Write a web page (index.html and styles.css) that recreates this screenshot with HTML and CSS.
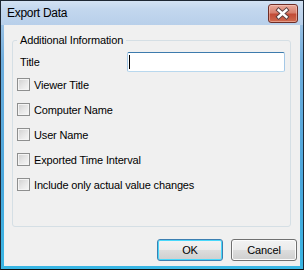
FILE: index.html
```html
<!DOCTYPE html>
<html lang="en">

<head>
    <meta charset="UTF-8">
    <title>Export Data</title>
    <link rel="stylesheet" href="styles.css">
</head>

<body>
    <div class="window">
        <div class="titlebar">
            <span class="title">Export Data</span>
            <span class="close">
                <svg width="30" height="19" viewBox="0 0 30 19">
                    <path d="M11 6 L19 13 M19 6 L11 13" stroke="#5b4040" stroke-width="4.6" stroke-linecap="square" fill="none"/>
                    <path d="M11 6 L19 13 M19 6 L11 13" stroke="#ffffff" stroke-width="2.6" stroke-linecap="square" fill="none"/>
                </svg>
            </span>
        </div>

        <div class="client">
            <fieldset class="group">
                <legend>Additional Information</legend>

                <div class="title-row">
                    <span class="label">Title</span>
                    <span class="textbox"><span class="caret"></span></span>
                </div>

                <div class="check"><span class="box"></span>Viewer Title</div>
                <div class="check"><span class="box"></span>Computer Name</div>
                <div class="check"><span class="box"></span>User Name</div>
                <div class="check"><span class="box"></span>Exported Time Interval</div>
                <div class="check"><span class="box"></span>Include only actual value changes</div>
            </fieldset>

            <div class="buttons">
                <span class="btn default">OK</span>
                <span class="btn">Cancel</span>
            </div>
        </div>
    </div>
</body>

</html>
```

FILE: styles.css
```css
html,
body {
    margin: 0;
    padding: 0;
}

body {
    font-family: "Liberation Sans", Arial, sans-serif;
    font-size: 11px;
    letter-spacing: -0.15px;
    color: #000;
}

.window {
    box-sizing: border-box;
    width: 304px;
    height: 270px;
    border: 1px solid #1d2733;
    border-bottom-color: #0c0c0c;
    background: linear-gradient(to bottom, #b6cde8 0, #6eaddd 60px, #4aa7dc 180px, #38b6e4 100%);
    display: flex;
    flex-direction: column;
}

.titlebar {
    height: 24px;
    display: flex;
    align-items: flex-start;
    background: linear-gradient(to bottom, #d3e2f3 0, #c3d7ee 8px, #b8cfea 24px);
}

.title {
    font-size: 12px;
    letter-spacing: -0.3px;
    padding-left: 6px;
    line-height: 24px;
    flex: 1;
}

.close {
    display: flex;
    box-sizing: border-box;
    width: 30px;
    height: 19px;
    margin: 3px 5px 0 0;
    border: 1px solid #6e2d26;
    border-radius: 3px;
    background: linear-gradient(to bottom, #e9aa9b 0, #d7806e 45%, #c24c37 55%, #cf6a4f 100%);
    box-shadow: inset 0 0 0 1px rgba(255, 220, 210, 0.45);
}

.close svg {
    margin: -1px 0 0 -1px;
}

.client {
    height: 241px;
    margin: 0 3px;
    background: #f0f0f0;
    display: flex;
    flex-direction: column;
}

.group {
    margin: 9px 9px 0 8px;
    padding: 5px 5px 29px 4px;
    border: 1px solid #d5dfe5;
    border-radius: 3px;
    min-width: 0;
}

.group legend {
    padding: 0 3px;
    line-height: 13px;
}

.title-row {
    height: 20px;
    display: flex;
    align-items: center;
}

.title-row .label {
    margin-left: 3px;
}

.textbox {
    box-sizing: border-box;
    width: 158px;
    height: 20px;
    margin-left: auto;
    padding-left: 1px;
    display: flex;
    align-items: center;
    background: #fff;
    border: 1px solid #a5c8e6;
    border-top-color: #3d7bad;
    border-bottom-color: #b9d8ee;
    border-radius: 2px;
}

.caret {
    width: 1px;
    height: 14px;
    background: #000;
}

.check {
    height: 25px;
    display: flex;
    align-items: center;
    gap: 4px;
}

.box {
    box-sizing: border-box;
    width: 13px;
    height: 13px;
    border: 1px solid #8e8f8f;
    background: linear-gradient(135deg, #cfcfcf 0, #e6e6e6 50%, #f8f8f8 100%);
    box-shadow: inset 0 0 0 1px #f4f4f4;
}

.buttons {
    display: flex;
    justify-content: flex-end;
    gap: 8px;
    margin-top: 12px;
    padding-right: 3px;
}

.btn {
    box-sizing: border-box;
    width: 66px;
    height: 22px;
    display: flex;
    align-items: center;
    justify-content: center;
    border: 1px solid #707070;
    border-radius: 3px;
    background: linear-gradient(to bottom, #f2f2f2 0, #ebebeb 50%, #dddddd 50%, #cfcfcf 100%);
    box-shadow: inset 0 0 0 1px #fcfcfc;
}

.btn.default {
    border-color: #3c7fb1;
    box-shadow: inset 0 0 0 1px #48d8fb;
}
```
